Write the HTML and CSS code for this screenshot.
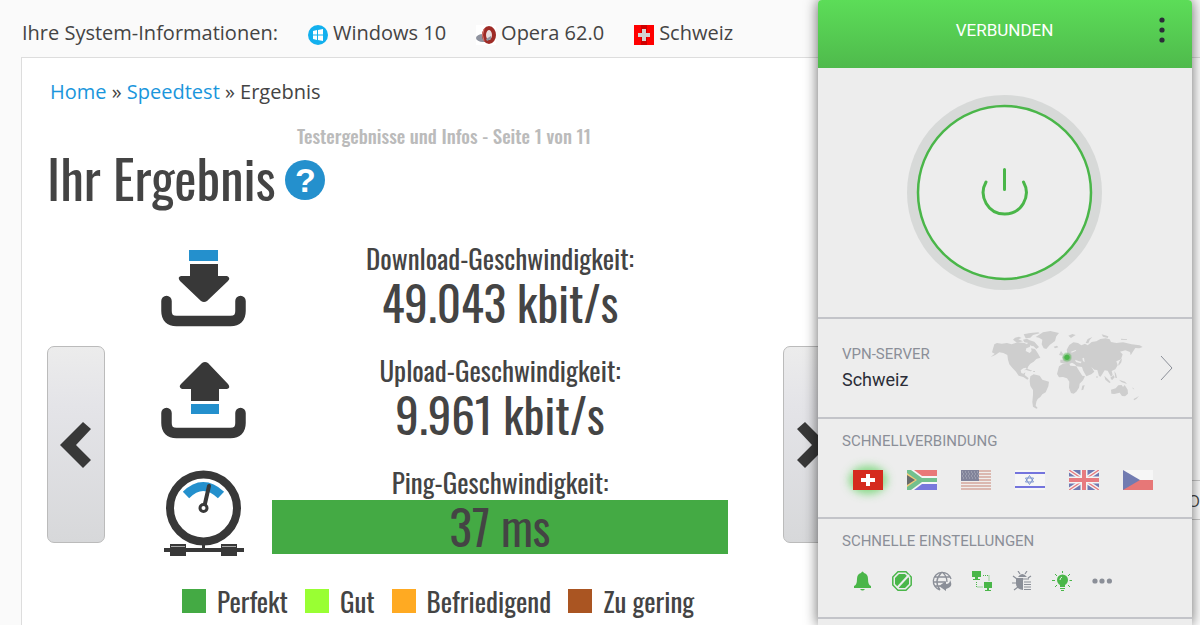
FILE: index.html
```
<!DOCTYPE html>
<html lang="de">

<head>
    <meta charset="UTF-8">
    <meta name="viewport" content="width=device-width, initial-scale=1.0">
    <title>Speedtest - Ergebnis</title>
    <link rel="stylesheet" href="styles.css">
</head>

<body>
    <header class="sysinfo">
        <span class="sysinfo-label">Ihre System-Informationen:</span>
        <span class="sysinfo-item">
            <svg width="20" height="20" viewBox="0 0 20 20">
                <circle cx="10" cy="10" r="10" fill="#12b0ee"/>
                <path d="M5 6l4-1v4.500H5zM10 5l5-1v5.500h-5zM5 10.500h4V15l-4-1zM10 10.500h5V16l-5-1z" fill="#fff"/>
            </svg>
            Windows 10
        </span>
        <span class="sysinfo-item">
            <svg width="20" height="20" viewBox="0 0 20 20">
                <path d="M0 0h20v20H0z" fill="#fff"/>
                <ellipse cx="7" cy="13" rx="7" ry="4" fill="#8f939f"/>
                <ellipse cx="13" cy="10" rx="5" ry="7" fill="#e9dede" stroke="#9e2b26" stroke-width="4"/>
                <path d="M8 4Q5 10 8 16" fill="none" stroke="#d77b73"/>
                <path d="M10 14l5-3v3l-4 2z" fill="#8f939f"/>
            </svg>
            Opera 62.0
        </span>
        <span class="sysinfo-item">
            <svg width="20" height="20" viewBox="0 0 20 20">
                <path d="M0 0h20v20H0z" fill="#f00"/>
                <path d="M7 0h6v20H7z" fill="#d00000"/>
                <path d="M8 4h4v4h4v4h-4v4H8v-4H4V8h4z" fill="#d4d4d4"/>
            </svg>
            Schweiz
        </span>
    </header>

    <main class="page">
        <div class="content">
            <nav class="breadcrumb">
                <a href="#">Home</a> » <a href="#">Speedtest</a> » Ergebnis
            </nav>
            <p class="subtitle">Testergebnisse und Infos - Seite 1 von 11</p>
            <div class="headline">
                <h1>Ihr Ergebnis</h1>
                <button class="help" aria-label="Hilfe">?</button>
            </div>

            <div class="slider">
                <button class="nav-btn" aria-label="Zurück">
                    <svg width="32" height="46" viewBox="0 0 32 46"><path d="M0 23L23 0l8 7-15 16 15 15-8 8z" fill="#383838"/></svg>
                </button>

                <div class="results">
                    <div class="result">
                        <svg class="result-icon" width="86" height="80" viewBox="0 0 86 80">
                            <path d="M28 1h29v11H28z" fill="#2490cd"/>
                            <path d="M29 15h28v12h9q4 2 1 5L46 52q-3 2-6 0L19 32q-3-4 1-5h9z" fill="#383838"/>
                            <path d="M5.500 52v10q0 10 10 10h54q10 0 10-10V52" fill="none" stroke="#383838" stroke-width="10.500" stroke-linecap="round"/>
                        </svg>
                        <div class="result-text">
                            <span class="label">Download-Geschwindigkeit:</span>
                            <span class="value">49.043 kbit/s</span>
                        </div>
                    </div>
                    <div class="result">
                        <svg class="result-icon" width="86" height="80" viewBox="0 0 86 80">
                            <path d="M30 43h28v10H30z" fill="#2490cd"/>
                            <path d="M30 40V28h-9q-4-2-1-5L41 2q3-2 6 0l20 21q3 4-1 5h-8v12z" fill="#383838"/>
                            <path d="M5.500 52v10q0 10 10 10h54q10 0 10-10V52" fill="none" stroke="#383838" stroke-width="10.500" stroke-linecap="round"/>
                        </svg>
                        <div class="result-text">
                            <span class="label">Upload-Geschwindigkeit:</span>
                            <span class="value">9.961 kbit/s</span>
                        </div>
                    </div>
                    <div class="result">
                        <svg class="result-icon" width="86" height="88" viewBox="0 0 86 88">
                            <circle cx="42.500" cy="39" r="33.500" fill="none" stroke="#383838" stroke-width="8"/>
                            <path d="M25 26Q42 9 60 26" fill="none" stroke="#2490cd" stroke-width="9"/>
                            <path d="M43 39l5-22" stroke="#383838" stroke-width="4" stroke-linecap="round"/>
                            <circle cx="42.500" cy="39" r="3.500" fill="#fff" stroke="#383838" stroke-width="3"/>
                            <path d="M41 74h3v5h-3zM3 79h80v4H3zM9 75h16v12H9zM60 75h16v12H60z" fill="#383838"/>
                            <path d="M10 77.500h14M61 77.500h14" stroke="#aaa"/>
                        </svg>
                        <div class="result-text">
                            <span class="label">Ping-Geschwindigkeit:</span>
                            <span class="value perfect">37 ms</span>
                        </div>
                    </div>

                    <ul class="legend">
                        <li><i class="perfect"></i>Perfekt</li>
                        <li><i class="good"></i>Gut</li>
                        <li><i class="ok"></i>Befriedigend</li>
                        <li><i class="bad"></i>Zu gering</li>
                    </ul>
                </div>

                <button class="nav-btn" aria-label="Weiter">
                    <svg width="32" height="46" viewBox="0 0 32 46"><path d="M32 23L9 0 1 7l15 16L1 38l8 8z" fill="#383838"/></svg>
                </button>
            </div>
        </div>
        <aside class="sidebar">O</aside>
    </main>

    <section class="vpn">
        <div class="vpn-head">
            <h2>VERBUNDEN</h2>
            <button class="menu" aria-label="Menü">
                <svg width="6" height="26" viewBox="0 0 6 26" fill="#2b2d38"><circle cx="3" cy="3" r="2.600"/><circle cx="3" cy="13" r="2.600"/><circle cx="3" cy="23" r="2.600"/></svg>
            </button>
        </div>

        <div class="vpn-power">
            <button class="power" aria-label="Trennen">
                <svg width="196" height="195" viewBox="0 0 196 195" fill="none" stroke="#4ab649">
                    <circle cx="97.500" cy="97.500" r="97.500" fill="#d7d9d8" stroke="none"/>
                    <circle cx="97.500" cy="97.500" r="86.500" fill="#ededed" stroke-width="2.500"/>
                    <path d="M97.500 74.500v20M79 87a21.500 21.500 0 1 0 37.500 0" stroke-width="3" stroke-linecap="round"/>
                </svg>
            </button>
        </div>

        <div class="vpn-row server">
            <div class="server-name">
                <h3>VPN-SERVER</h3>
                <p>Schweiz</p>
            </div>
            <svg class="map" width="170" height="95" viewBox="0 0 510 285" fill="#cecece">
                <path d="M40 70l8-4 14 2 16-2 14 4 18-6 20 2 8 4 6-10 6 8-4 10-10 4-2 8 12 6 6-6-2-8 12 2 8 12 8 14-12 4-8 8-10 6-6 8-4 10-3-6-8 2-8 6 2 8 6 2 6-4-2 8 12 10-4 4-12-8-14-4-8-12-10-10-10-12-4-14-2-14-12-6-12-2-12 8-14 6 12-10-8-4z"/>
                <path d="M164 48l22-14 22-4 26 6-8 10-4 14-16 12-10 12-8-2-6-12 2-14-10-6zM128 40l20-4 24-2 4 3-20 5-8 8-14 2zM96 56l6-6 12-3 8 4-10 4 14 6-18 4zM126 56l12-3 8 5 14 4 14 16-8 6-8-8-8-2-6-8-14-2zM218 77l10-3 4 5-10 3z"/>
                <path d="M128 148l10-5 16 6-6 2-12-4zM156 151l6-1v3h-6zM148 166l10-6 18 4 8 12 20 6-2 14-8 18-10 6-6 8-8 6-4 8-2 12 6 7-4 2-10-6-2-14 2-22v-14l-8-12-2-14z"/>
                <path d="M234 136l12-8 18-2 4 8 18 2 10 16 8 12 8 2-6 12-10 10-2 12-8 12-8 6-8-2-6-16 1-18-7-10-12-4-12 1-6-10zM304 194l7-2-4 14-6 2zM234 102l6-12 6 8-2 6z"/>
                <path d="M238 125v-9h9l-4-8 10-5 6-7-2-10 8-14 12-8 14 2 10 7 11-5 8 5 12-10 14-2 12-7 16-2 12 3 4 8 16 3 20-2 26 6 24 3 9 5-10 4-12-1-8 12-6 10-2-10-14-5-16 4 8 8-5 15-14 6 4 12-7 12-11 5 3 12-5 5-10-18-9-1-12 19-5-2-5-18-9-1-9-8 9 14-9 8-15 6-10-18-3-10-16-2-6-6-8-5-10 5z"/>
                <path d="M262 44l12-5 10 3-14 9zM314 66l6-12 14-6-8 9-4 10zM362 40l20 6-2 5-14-4zM420 53l18 2v2l-18-1zM412 130l4-10 7-8-2 12-8 10zM370 164l10 10 9 10-4 2-12-10zM388 170l10-7 3 6-8 9zM400 150l5 8 3 13-5-1zM414 176l18 6 6 7-17-6z"/>
                <path d="M390 206l14-4 8-9 10-1 4 6 5-6 9 14 1 12-9 8-9-1-7-10-16 4-9-1zM458 234l16-9-8 9-7 4zM454 199l6 6-4-1zM346 166h4v4h-4z"/>
                <path d="M282 116l12 5 8 1-3 5-14-4zM304 112l5-2 2 14-5-4zM270 92l16-6-2 4-12 5z" fill="#ededed"/>
                <circle cx="258" cy="109" r="15" fill="#4ab649" opacity=".2"/>
                <circle cx="258" cy="109" r="12" fill="#4ab649" opacity=".4"/>
                <circle cx="258" cy="109" r="8" fill="#4ab649"/>
            </svg>
            <svg class="chevron" width="14" height="26" viewBox="0 0 14 26" fill="none" stroke="#8b8f98"><path d="M1 1l11 12L1 25"/></svg>
        </div>

        <div class="vpn-row">
            <h3>SCHNELLVERBINDUNG</h3>
            <div class="flags">
                <button class="active" aria-label="Schweiz">
                    <svg width="30" height="20" viewBox="0 0 30 20"><path d="M0 0h30v20H0z" fill="#d52b1e"/><path d="M13 4h4v4h5v4h-5v4h-4v-4H8V8h5z" fill="#fff"/></svg>
                </button>
                <button aria-label="Südafrika">
                    <svg width="30" height="20" viewBox="0 0 30 20">
                        <path d="M0 0h30v20H0z" fill="#f6f6f6"/>
                        <path d="M7 0h23v6H15z" fill="#e97878"/>
                        <path d="M7 20h23v-6H15z" fill="#7878dc"/>
                        <path d="M0 0h4l11 8h15v4H15L4 20H0z" fill="#73c08e"/>
                        <path d="M0 3l10 7-10 7z" fill="#f2ca77"/>
                        <path d="M0 5l8 5-8 5z" fill="#686c6c"/>
                    </svg>
                </button>
                <button aria-label="USA">
                    <svg width="30" height="20" viewBox="0 0 30 20">
                        <path d="M0 0h30v20H0z" fill="#f0eeec"/>
                        <path d="M0 1h30M0 4h30M0 7h30M0 10h30M0 13h30M0 16h30M0 19h30" stroke="#d4a69c" stroke-width="1.400"/>
                        <path d="M0 0h18v11H0z" fill="#81839a"/>
                        <path d="M1 2h16M2 4h16M1 6h16M2 8h16" stroke="#b4b6c2" stroke-dasharray="1 2"/>
                    </svg>
                </button>
                <button aria-label="Israel">
                    <svg width="30" height="20" viewBox="0 0 30 20">
                        <path d="M0 0h30v20H0z" fill="#f6f6f6"/>
                        <path d="M0 2h30v2H0zM0 16h30v2H0z" fill="#7474dd"/>
                        <path d="M14.500 5.500l4 6.500h-8zM14.500 14.500l4-6.500h-8z" fill="none" stroke="#7e96cf"/>
                    </svg>
                </button>
                <button aria-label="Großbritannien">
                    <svg width="30" height="20" viewBox="0 0 30 20">
                        <path d="M0 0h30v20H0z" fill="#7079b1"/>
                        <path d="M0 0l30 20M30 0L0 20" stroke="#f4f4f4" stroke-width="4"/>
                        <path d="M0 0l30 20M30 0L0 20" stroke="#e77b80" stroke-width="1.400"/>
                        <path d="M15 0v20M0 10h30" stroke="#f4f4f4" stroke-width="7"/>
                        <path d="M15 0v20M0 10h30" stroke="#e77b80" stroke-width="4"/>
                    </svg>
                </button>
                <button aria-label="Tschechien">
                    <svg width="30" height="20" viewBox="0 0 30 20"><path d="M0 0h30v10H0z" fill="#f6f6f6"/><path d="M0 10h30v10H0z" fill="#e77777"/><path d="M0 0l17 10L0 20z" fill="#717bb1"/></svg>
                </button>
            </div>
        </div>

        <div class="vpn-row">
            <h3>SCHNELLE EINSTELLUNGEN</h3>
            <div class="tools">
                <button aria-label="Benachrichtigungen">
                    <svg width="20" height="20" viewBox="0 0 20 20" fill="#4ab649"><path d="M9 2q1.500-3 3 0 4 1 4 6 0 6 3 7v2H2v-2q3-1 3-7 0-5 4-6zM8 18h5q-2.500 3-5 0z"/></svg>
                </button>
                <button aria-label="Werbeblocker">
                    <svg width="20" height="20" viewBox="0 0 20 20"><path d="M6 .8h8L19.200 6v8L14 19.200H6L.8 14V6z" fill="none" stroke="#4ab649" stroke-width="1.500"/><path d="M7 3h6l4 4v6l-4 4H7l-4-4V7z" fill="#4ab649"/><path d="M5 17L17 4" stroke="#ededed" stroke-width="2"/></svg>
                </button>
                <button aria-label="Tracking">
                    <svg width="20" height="20" viewBox="0 0 20 20" fill="none" stroke="#8b8f98" stroke-width="1.300"><path d="M8 19A9 9 0 1 1 19 8M10 1Q1 10 8 19M10 1q5 4 5 10M2 6h16M1 11h12M3 15h5"/><path d="M7 15l7-5v3q4 0 4-4 4 7-4 9v2z" fill="#8b8f98" stroke="none"/></svg>
                </button>
                <button aria-label="Netzwerk">
                    <svg width="20" height="20" viewBox="0 0 20 20" fill="#4ab649"><path d="M0 0h9v6H6v2h2v1H1V8h2V6H0zM12 11h8v6h-3v2h2v1h-6v-1h2v-2h-3z"/><path d="M11 4.500h6V10M4.500 11v5H11" fill="none" stroke="#4ab649" stroke-dasharray="1 1"/></svg>
                </button>
                <button aria-label="Malware">
                    <svg width="20" height="20" viewBox="0 0 20 20"><path d="M6 6q4-6 9 0zM4 7h7v12q-7-1-7-6z" fill="#8b8f98"/><path d="M8 3L6 0M13 3l2-3M5 8L1 5M5 12H0M6 16l-4 3M16 7l3-2M11 8h6M12 11h7M12 13.500h7M12 16h7M12 18.500h7" stroke="#8b8f98" stroke-width="1.200"/></svg>
                </button>
                <button aria-label="Energie">
                    <svg width="20" height="20" viewBox="0 0 20 20"><circle cx="10.500" cy="9" r="5.500" fill="#4ab649"/><path d="M8 14h5v2H8z" fill="#4ab649"/><path d="M10.500 0v2M0 9.500h3M17.500 9.500H20M3 3l2 2M18 3l-2 2M3 16l2-2M18 16l-2-2M8 17.500h5M9 19.500h3" stroke="#4ab649"/><path d="M8 9q0-2 2-3" fill="none" stroke="#ededed"/></svg>
                </button>
                <button aria-label="Mehr">
                    <svg width="20" height="20" viewBox="0 0 20 20" fill="#8b8f98"><circle cx="3" cy="10" r="2.600"/><circle cx="10" cy="10" r="2.600"/><circle cx="17.400" cy="10" r="2.600"/></svg>
                </button>
            </div>
        </div>
    </section>
</body>

</html>
```
FILE: styles.css
```
* {
    box-sizing: border-box;
}

body {
    margin: 0;
    min-height: 100vh;
    display: flex;
    flex-direction: column;
    overflow: hidden;
    background: #fafafa;
    color: #444;
    font-family: "Open Sans", sans-serif;
    font-size: 20px;
}

button {
    border: 0;
    padding: 0;
    background: none;
    cursor: pointer;
}

svg {
    display: block;
    flex: none;
}

h1,
h2,
h3,
p,
ul {
    margin: 0;
    padding: 0;
    font-weight: normal;
}

/* system info bar */
.sysinfo {
    display: flex;
    align-items: center;
    gap: 30px;
    padding: 18px 22px 9px;
    line-height: 30px;
}

.sysinfo-item {
    display: flex;
    align-items: center;
    gap: 5px;
}

.sysinfo-item svg {
    margin-top: 4px;
}

/* page */
.page {
    flex: 1;
    display: flex;
    margin-left: 21px;
    border-top: 1px solid #ddd;
    border-left: 1px solid #ddd;
    background: #fff;
}

.content {
    width: 819px;
    padding: 20px 0 0 25px;
}

.breadcrumb {
    padding-left: 3px;
    line-height: 28px;
}

.breadcrumb a {
    color: #1a96dc;
    text-decoration: none;
}

.subtitle,
.headline,
.results {
    font-family: Oswald, "Liberation Sans Narrow", sans-serif;
}

.subtitle {
    margin-top: 14px;
    text-align: center;
    color: #bbb;
    font-size: 19px;
    font-weight: 500;
    line-height: 30px;
}

.headline {
    display: flex;
    align-items: center;
    gap: 10px;
    height: 60px;
}

h1 {
    padding-bottom: 6px;
    font-size: 53px;
    line-height: 54px;
}

.help {
    width: 40px;
    height: 40px;
    border-radius: 50%;
    background: #2490cd;
    color: #fff;
    font: bold 34px/40px "Liberation Sans", sans-serif;
}

.slider {
    display: flex;
    align-items: flex-start;
    margin-top: 32px;
}

.nav-btn {
    flex: none;
    display: flex;
    align-items: center;
    justify-content: center;
    width: 58px;
    height: 197px;
    margin-top: 104px;
    border: 1px solid #bbb;
    border-radius: 7px;
    background: linear-gradient(#ececec, #e4e4e8 30%, #d7d8da);
}

.results {
    flex: 1;
    display: flex;
    flex-direction: column;
    gap: 24px;
    padding: 0 55px 0 56px;
}

.result {
    display: flex;
    align-items: flex-start;
    gap: 25px;
    height: 88px;
}

.result-icon {
    margin-top: 7px;
}

.result:nth-child(3) .result-icon {
    margin-top: 3px;
}

.result-text {
    flex: 1;
    text-align: center;
}

.label,
.value {
    display: block;
}

.label {
    padding-bottom: 2px;
    font-size: 27px;
    line-height: 32px;
}

.value {
    padding-bottom: 2px;
    font-size: 47px;
    line-height: 52px;
}

.perfect {
    background: #44aa44;
}

.good {
    background: #99ff33;
}

.ok {
    background: #ffaa22;
}

.bad {
    background: #aa5522;
}

.legend {
    display: flex;
    gap: 17px;
    margin-top: 7px;
    padding-left: 21px;
    list-style: none;
    font-size: 27px;
    line-height: 32px;
    white-space: nowrap;
}

.legend li {
    display: flex;
    align-items: center;
    gap: 11px;
}

.legend i {
    width: 24px;
    height: 24px;
}

.sidebar {
    flex: 1;
    height: 40px;
    margin-top: 422px;
    border: 1px solid #ccc;
    border-right: 0;
    line-height: 40px;
    font-size: 16px;
    text-align: right;
}

/* vpn popup */
.vpn {
    position: absolute;
    top: 0;
    right: 8px;
    bottom: 0;
    width: 374px;
    border-radius: 4px 4px 0 0;
    background: #ededed;
    box-shadow: 0 0 14px rgba(0, 0, 0, .6);
    font-family: Roboto, sans-serif;
    color: #8b8f98;
}

.vpn-head {
    display: flex;
    align-items: center;
    height: 68px;
    padding: 0 27px 8px 32px;
    border-radius: 4px 4px 0 0;
    background: linear-gradient(#5cdd58, #4fba4c);
}

.vpn-head h2 {
    flex: 1;
    text-align: center;
    color: #fff;
    font-size: 17px;
}

.vpn-power {
    display: flex;
    justify-content: center;
    padding: 27px 0;
    border-bottom: 2px solid #c3c4c9;
}

.vpn-row {
    height: 100px;
    padding: 12px 18px 0 24px;
    border-bottom: 2px solid #c3c4c9;
}

.vpn-row h3 {
    font-size: 15px;
    line-height: 20px;
}

.server {
    display: flex;
    align-items: center;
    gap: 9px;
    padding-top: 0;
}

.server-name {
    flex: 1;
    padding-top: 4px;
}

.server-name p {
    color: #2b2d38;
    font-size: 18px;
    line-height: 32px;
}

.flags,
.tools {
    display: flex;
}

.flags {
    gap: 24px;
    margin-top: 19px;
    padding-left: 11px;
}

.flags .active {
    border-radius: 50%;
    box-shadow: 0 0 8px 4px rgba(90, 210, 90, .7);
}

.tools {
    gap: 20px;
    margin-top: 20px;
    padding-left: 10px;
}
```
